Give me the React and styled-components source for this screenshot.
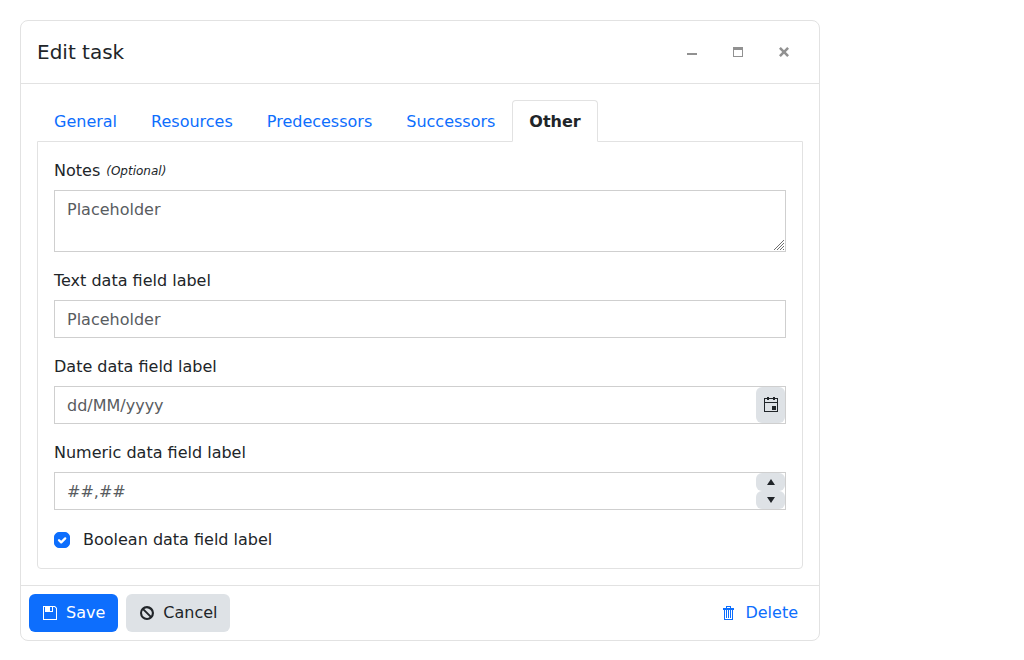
import React, { useState } from "react";
import styled, { createGlobalStyle, css } from "styled-components";

const color = {
  text: "#212529",
  subtle: "#595c5f",
  primary: "#0d6efd",
  neutral: "#dee2e6",
  line: "#e2e2e2",
  inputLine: "#cfcfcf",
  windowAction: "#919191",
};

const GlobalStyle = createGlobalStyle`
  *, *::before, *::after { box-sizing: border-box; }
  body {
    margin: 0;
    background: #ffffff;
    color: ${color.text};
    font: 400 16px/24px "DejaVu Sans", sans-serif;
  }
  button, input, textarea { font: inherit; color: inherit; margin: 0; }
`;

const Page = styled.main`
  padding: 20px;
`;

const Dialog = styled.form`
  display: flex;
  flex-direction: column;
  max-width: 800px;
  border: 1px solid ${color.line};
  border-radius: 8px;
  background: #ffffff;
`;

const TitleBar = styled.header`
  display: flex;
  align-items: center;
  justify-content: space-between;
  padding: 16px;
  border-bottom: 1px solid ${color.line};
`;

const Title = styled.h1`
  margin: 0;
  font-size: 20px;
  font-weight: 400;
  line-height: 30px;
`;

const WindowActions = styled.div`
  display: flex;
  gap: 8px;
`;

const WindowAction = styled.button`
  display: flex;
  align-items: center;
  justify-content: center;
  width: 38px;
  height: 30px;
  padding: 0;
  border: 0;
  background: transparent;
  color: ${color.windowAction};
  cursor: pointer;
`;

const Body = styled.div`
  padding: 16px;
`;

const TabList = styled.div`
  display: flex;
`;

const Tab = styled.button`
  padding: 9px 16px 7px;
  border: 1px solid transparent;
  border-radius: 4px 4px 0 0;
  background: transparent;
  color: ${color.primary};
  cursor: pointer;

  ${({ $active }) =>
    $active &&
    css`
      z-index: 1;
      border-color: ${color.line};
      border-bottom-color: #ffffff;
      background: #ffffff;
      color: ${color.text};
      font-weight: 700;
    `}
`;

const TabPanel = styled.div`
  display: flex;
  flex-direction: column;
  gap: 16px;
  margin-top: -1px;
  padding: 16px;
  border: 1px solid ${color.line};
  border-radius: 0 0 4px 4px;
`;

const Field = styled.div`
  display: flex;
  flex-direction: column;
  gap: 7px;
`;

const Label = styled.label`
  display: flex;
  align-items: center;
  gap: 6px;
  line-height: 25px;
`;

const Optional = styled.span`
  padding-top: 1px;
  font-size: 12px;
  font-style: italic;
  line-height: 24px;
`;

const InputFrame = styled.div`
  display: flex;
  border: 1px solid ${color.inputLine};
  background: #ffffff;
`;

const controlText = css`
  padding: 6px 12px;
  border: 0;
  border-radius: 0;
  outline: 0;
  background: transparent;

  &::placeholder {
    color: ${color.subtle};
    opacity: 1;
  }
`;

const TextInput = styled.input`
  ${controlText}
  flex: 1;
  min-width: 0;
  height: 36px;
`;

const TextAreaFrame = styled.div`
  position: relative;
`;

const TextArea = styled.textarea`
  ${controlText}
  display: block;
  width: 100%;
  padding: 7px 12px 5px;
  border: 1px solid ${color.inputLine};
  resize: vertical;

  &::-webkit-resizer {
    background: transparent;
  }
`;

const Grip = styled.svg`
  position: absolute;
  right: 2px;
  bottom: 2px;
  width: 10px;
  height: 10px;
  fill: none;
  stroke: #707070;
  pointer-events: none;
`;

const PickerButton = styled.button`
  display: flex;
  flex: 1;
  align-items: center;
  justify-content: center;
  width: 29px;
  min-height: 0;
  padding: 0;
  border: 0;
  border-radius: 6px;
  background: ${color.neutral};
  cursor: pointer;
`;

const InputButtons = styled.div`
  display: flex;
  flex-direction: column;
`;

const CheckRow = styled.div`
  display: flex;
  align-items: center;
  gap: 13px;
  padding-top: 2px;
`;

const CheckLabel = styled.label`
  line-height: 24px;
`;

const CheckBox = styled.span`
  position: relative;
  display: flex;
  width: 16px;
  height: 16px;

  input {
    appearance: none;
    width: 16px;
    height: 16px;
    border: 1px solid ${color.inputLine};
    border-radius: 5px;
    background: #ffffff;
  }

  input:checked {
    border-color: ${color.primary};
    background: ${color.primary};
  }

  svg {
    position: absolute;
    inset: 0;
    pointer-events: none;
  }
`;

const Footer = styled.footer`
  display: flex;
  gap: 8px;
  padding: 8px;
  border-top: 1px solid ${color.line};
`;

const Spacer = styled.div`
  flex: 1;
`;

const variants = {
  primary: css`
    background: ${color.primary};
    color: #ffffff;
  `,
  neutral: css`
    background: ${color.neutral};
    color: ${color.text};
  `,
  flat: css`
    background: transparent;
    color: ${color.primary};
  `,
};

const Button = styled.button`
  display: flex;
  align-items: center;
  gap: 8px;
  padding: 6px 12px;
  border: 1px solid transparent;
  border-radius: 6px;
  cursor: pointer;
  ${({ $variant }) => variants[$variant]}
`;

const Svg = styled.svg`
  display: block;
  flex: none;
  width: 16px;
  height: 16px;
  fill: currentColor;
`;

const paths = {
  minimize: "M3 9h10v2H3z",
  maximize: "M3 3h10v10H3zM4 6v6h8V6z",
  close:
    "M4.8 3 8 6.2 11.2 3 13 4.8 9.8 8 13 11.2 11.2 13 8 9.8 4.8 13 3 11.2 6.2 8 3 4.8z",
  calendar:
    "M4 0h2v1h4V0h2v1h3v14H1V1h3zM2 2v3h12V2h-2v1h-2V2H6v1H4V2zM2 6v8h12V6zM9 9h4v4H9z",
  up: "M8 5l4 6H4z",
  down: "M4 5h8l-4 6z",
  save: "M1 1h12l2 2v12H1zM2 2v12h12V3.4L12.6 2H11v5H3V2zM8 2v4h2V2z",
  cancel:
    "M8 1a7 7 0 1 0 0 14A7 7 0 0 0 8 1zM3 8a5 5 0 0 1 .9-2.7l6.8 6.8A5 5 0 0 1 3 8zM12.1 10.7 5.3 3.9a5 5 0 0 1 6.8 6.8z",
  trash:
    "M5 1h5v2h3v2H2V3h3zM6 2v1h3V2zM3 5h9v10H3zM4 5v9h7V5zM5 5h1v8H5zM7 5h1v8H7zM9 5h1v8H9z",
};

function Icon({ name, crisp }) {
  return (
    <Svg
      viewBox="0 0 16 16"
      aria-hidden="true"
      shapeRendering={crisp ? "crispEdges" : undefined}
    >
      <path fillRule="evenodd" d={paths[name]} />
    </Svg>
  );
}

const tabs = ["General", "Resources", "Predecessors", "Successors", "Other"];

export default function App() {
  const [active, setActive] = useState("Other");
  const [checked, setChecked] = useState(true);

  return (
    <>
      <GlobalStyle />
      <Page>
        <Dialog aria-labelledby="dialog-title" onSubmit={(e) => e.preventDefault()}>
          <TitleBar>
            <Title id="dialog-title">Edit task</Title>
            <WindowActions>
              <WindowAction type="button" aria-label="Minimize">
                <Icon name="minimize" />
              </WindowAction>
              <WindowAction type="button" aria-label="Maximize">
                <Icon name="maximize" />
              </WindowAction>
              <WindowAction type="button" aria-label="Close">
                <Icon name="close" />
              </WindowAction>
            </WindowActions>
          </TitleBar>

          <Body>
            <TabList role="tablist">
              {tabs.map((name) => (
                <Tab
                  key={name}
                  type="button"
                  role="tab"
                  aria-selected={name === active}
                  $active={name === active}
                  onClick={() => setActive(name)}
                >
                  {name}
                </Tab>
              ))}
            </TabList>
            <TabPanel role="tabpanel" aria-label={active}>
              <Field>
                <Label htmlFor="notes">
                  Notes <Optional>(Optional)</Optional>
                </Label>
                <TextAreaFrame>
                  <TextArea id="notes" rows={2} placeholder="Placeholder" />
                  <Grip viewBox="0 0 10 10" aria-hidden="true">
                    <path d="M0 10 10 0M3 10 10 3M6 10 10 6M9 10 10 9" />
                  </Grip>
                </TextAreaFrame>
              </Field>
              <Field>
                <Label htmlFor="text-field">Text data field label</Label>
                <InputFrame>
                  <TextInput id="text-field" type="text" placeholder="Placeholder" />
                </InputFrame>
              </Field>
              <Field>
                <Label htmlFor="date-field">Date data field label</Label>
                <InputFrame>
                  <TextInput id="date-field" type="text" placeholder="dd/MM/yyyy" />
                  <InputButtons>
                    <PickerButton type="button" aria-label="Open calendar">
                      <Icon name="calendar" crisp />
                    </PickerButton>
                  </InputButtons>
                </InputFrame>
              </Field>
              <Field>
                <Label htmlFor="number-field">Numeric data field label</Label>
                <InputFrame>
                  <TextInput
                    id="number-field"
                    type="text"
                    inputMode="decimal"
                    placeholder="##,##"
                  />
                  <InputButtons>
                    <PickerButton type="button" aria-label="Increase value">
                      <Icon name="up" />
                    </PickerButton>
                    <PickerButton type="button" aria-label="Decrease value">
                      <Icon name="down" />
                    </PickerButton>
                  </InputButtons>
                </InputFrame>
              </Field>
              <CheckRow>
                <CheckBox>
                  <input
                    id="boolean-field"
                    type="checkbox"
                    checked={checked}
                    onChange={(e) => setChecked(e.target.checked)}
                  />
                  {checked && (
                    <Svg viewBox="0 0 16 16" aria-hidden="true">
                      <path
                        d="M5 8.2l2.2 2.2L11.2 6.4"
                        fill="none"
                        stroke="#ffffff"
                        strokeWidth="2.3"
                        strokeLinecap="round"
                        strokeLinejoin="round"
                      />
                    </Svg>
                  )}
                </CheckBox>
                <CheckLabel htmlFor="boolean-field">Boolean data field label</CheckLabel>
              </CheckRow>
            </TabPanel>
          </Body>

          <Footer>
            <Button type="submit" $variant="primary">
              <Icon name="save" />
              Save
            </Button>
            <Button type="button" $variant="neutral">
              <Icon name="cancel" />
              Cancel
            </Button>
            <Spacer />
            <Button type="button" $variant="flat">
              <Icon name="trash" crisp />
              Delete
            </Button>
          </Footer>
        </Dialog>
      </Page>
    </>
  );
}
